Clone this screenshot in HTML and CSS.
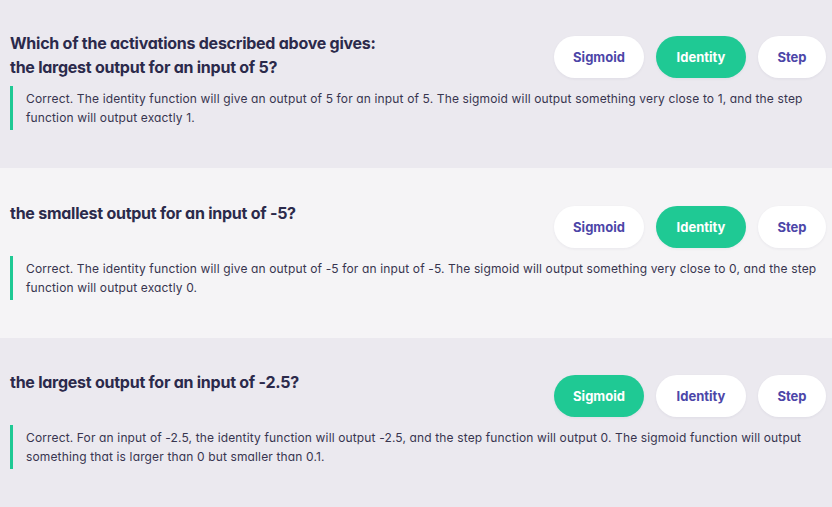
FILE: index.html
```html
<!DOCTYPE html>
<html lang="en">
<head>
<meta charset="utf-8">
<title>Activations quiz</title>
<link rel="stylesheet" href="styles.css">
</head>
<body>
<main class="quiz">
  <section class="item item--first">
    <div class="item-head">
      <h2 class="item-title">Which of the activations described above gives:<br>the largest output for an input of 5?</h2>
      <div class="choices">
        <button class="choice">Sigmoid</button>
        <button class="choice choice--on">Identity</button>
        <button class="choice">Step</button>
      </div>
    </div>
    <blockquote class="feedback">Correct. The identity function will give an output of 5 for an input of 5. The sigmoid will output something very close to 1, and the step function will output exactly 1.</blockquote>
  </section>
  <section class="item item--alt">
    <div class="item-head">
      <h2 class="item-title">the smallest output for an input of -5?</h2>
      <div class="choices">
        <button class="choice">Sigmoid</button>
        <button class="choice choice--on">Identity</button>
        <button class="choice">Step</button>
      </div>
    </div>
    <blockquote class="feedback">Correct. The identity function will give an output of -5 for an input of -5. The sigmoid will output something very close to 0, and the step function will output exactly 0.</blockquote>
  </section>
  <section class="item">
    <div class="item-head">
      <h2 class="item-title">the largest output for an input of -2.5?</h2>
      <div class="choices">
        <button class="choice choice--on">Sigmoid</button>
        <button class="choice">Identity</button>
        <button class="choice">Step</button>
      </div>
    </div>
    <blockquote class="feedback">Correct. For an input of -2.5, the identity function will output -2.5, and the step function will output 0. The sigmoid function will output something that is larger than 0 but smaller than 0.1.</blockquote>
  </section>
</main>
</body>
</html>
```
FILE: styles.css
```css
html, body {
  margin: 0;
  padding: 0;
  background: #ebe9ef;
}
body {
  font-family: Inter, "Noto Sans", "Liberation Sans", sans-serif;
  font-feature-settings: "cv11";
  color: #2c2a4b;
}
.quiz {
  display: flex;
  flex-direction: column;
}
.item {
  background: #ebe9ef;
  padding: 32px 6px 38px 10px;
}
.item--first {
  padding-top: 31px;
  padding-bottom: 38px;
}
.item--alt {
  background: #f5f4f6;
  padding-top: 33px;
}
.item-head {
  display: flex;
  justify-content: space-between;
  align-items: flex-start;
}
.item-title {
  margin: 0;
  font-size: 16px;
  line-height: 24px;
  font-weight: 700;
  letter-spacing: -0.25px;
  color: #2b2a4b;
}
.choices {
  display: flex;
  gap: 12px;
  margin: 5px 0 2px;
}
.choice {
  font-family: inherit;
  font-feature-settings: "cv11";
  height: 42px;
  width: 90px;
  border: none;
  border-radius: 21px;
  background: #ffffff;
  color: #4c46a8;
  font-size: 13px;
  font-weight: 700;
  box-shadow: 0 1px 3px rgba(40, 30, 80, 0.06);
  padding: 0;
}
.choice:last-child {
  width: 68px;
}
.choice--on {
  background: #1fc994;
  color: #ffffff;
}
.feedback {
  margin: 6px 0 0;
  padding: 3px 0 3px 13px;
  border-left: 3px solid #1fc994;
  font-size: 12px;
  line-height: 19px;
  letter-spacing: 0.14px;
  color: #38354f;
}
```
